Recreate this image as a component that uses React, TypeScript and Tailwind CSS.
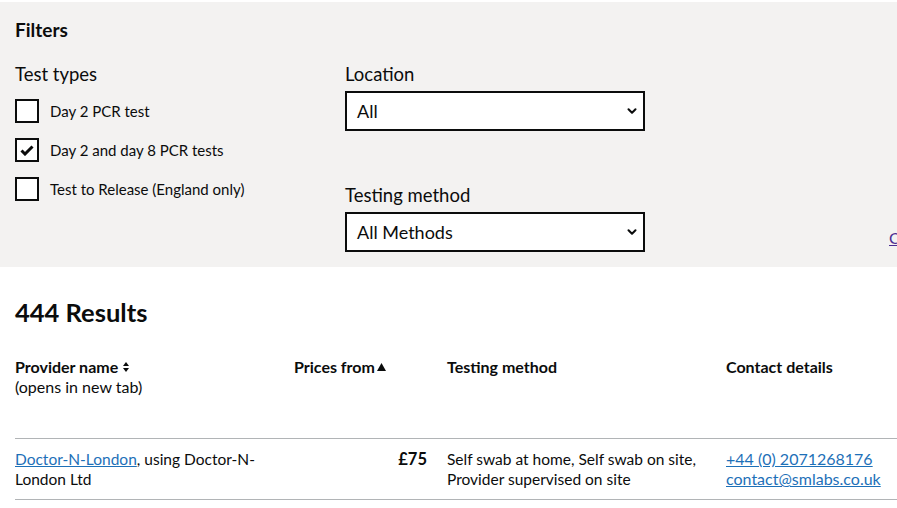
import { ChevronDown } from "lucide-react";

const font = { fontFamily: "Lato, 'Noto Sans', sans-serif" };

function Checkbox({ label, checked }: { label: string; checked?: boolean }) {
  return (
    <label className="flex items-center gap-[11px] h-[24px]">
      <span className="w-[24px] h-[24px] border-2 border-[#0b0c0c] bg-white flex items-center justify-center">
        {checked && (
          <svg width="14" height="11" viewBox="0 0 14 11">
            <path d="M1.5 5.5 L5 9 L12.5 1.5" stroke="#0b0c0c" strokeWidth="3" fill="none" />
          </svg>
        )}
      </span>
      <span className="text-[15px] text-[#0b0c0c]">{label}</span>
    </label>
  );
}

function Select({ value }: { value: string }) {
  return (
    <div className="w-[300px] h-[40px] border-2 border-[#0b0c0c] bg-white flex items-center justify-between pl-[10px] pr-[4px]">
      <span className="text-[18px] text-[#0b0c0c]">{value}</span>
      <ChevronDown size={14} strokeWidth={3.5} className="text-[#0b0c0c]" />
    </div>
  );
}

export default function App() {
  return (
    <div className="w-[897px] h-[508px] overflow-hidden bg-white pt-[2px]" style={font}>
      {/* Filters panel */}
      <section className="bg-[#f3f2f1] h-[265px] px-[15px] pt-[17px] relative">
        <h2 className="text-[19px] font-bold text-[#0b0c0c] leading-[22px]">Filters</h2>
        <div className="flex mt-[22px]">
          <div className="w-[330px]">
            <div className="text-[18.5px] text-[#0b0c0c] leading-[22px]">Test types</div>
            <div className="flex flex-col gap-[15px] mt-[14px]">
              <Checkbox label="Day 2 PCR test" />
              <Checkbox label="Day 2 and day 8 PCR tests" checked />
              <Checkbox label="Test to Release (England only)" />
            </div>
          </div>
          <div>
            <div className="text-[18.5px] text-[#0b0c0c] leading-[22px]">Location</div>
            <div className="mt-[6px]">
              <Select value="All" />
            </div>
            <div className="text-[18.5px] text-[#0b0c0c] leading-[22px] mt-[53px]">Testing method</div>
            <div className="mt-[6px]">
              <Select value="All Methods" />
            </div>
          </div>
        </div>
        <a className="absolute left-[889px] top-[224px] whitespace-nowrap text-[16px] text-[#4c2c92] underline">
          Clear filters
        </a>
      </section>

      {/* Results */}
      <section className="px-[15px] pt-[30px]">
        <h2 className="text-[25.5px] font-bold text-[#0b0c0c] leading-[30px]">444 Results</h2>
        <div className="w-[1000px] mt-[23px] text-[16px] text-[#0b0c0c] leading-[20px]">
          <div className="grid grid-cols-[279px_153px_279px_1fr] h-[89px] border-b border-[#b1b4b6] pt-[7px]">
            <div>
              <div className="font-bold flex items-center gap-[5px]">
                Provider name
                <svg width="6" height="10" viewBox="0 0 6 10">
                  <path d="M3 0 L6 4 H0 Z M3 10 L0 6 H6 Z" fill="#0b0c0c" />
                </svg>
              </div>
              <div>(opens in new tab)</div>
            </div>
            <div className="font-bold flex items-start gap-[2px]">
              Prices from
              <svg width="9" height="8" viewBox="0 0 9 8" className="mt-[6px]">
                <path d="M4.5 0 L9 8 H0 Z" fill="#0b0c0c" />
              </svg>
            </div>
            <div className="font-bold">Testing method</div>
            <div className="font-bold">Contact details</div>
          </div>
          <div className="grid grid-cols-[279px_153px_279px_1fr] h-[61px] border-b border-[#b1b4b6] pt-[10px] text-[15.5px]">
            <div className="pr-[8px]">
              <a className="text-[#1d70b8] underline">Doctor-N-London</a>, using Doctor-N-London Ltd
            </div>
            <div className="font-bold text-right pr-[20px] text-[16.5px]">£75</div>
            <div className="pr-[8px]">Self swab at home, Self swab on site, Provider supervised on site</div>
            <div className="flex flex-col text-[16px]">
              <a className="text-[#1d70b8] underline">+44 (0) 2071268176</a>
              <a className="text-[#1d70b8] underline">contact@smlabs.co.uk</a>
            </div>
          </div>
        </div>
      </section>
    </div>
  );
}
